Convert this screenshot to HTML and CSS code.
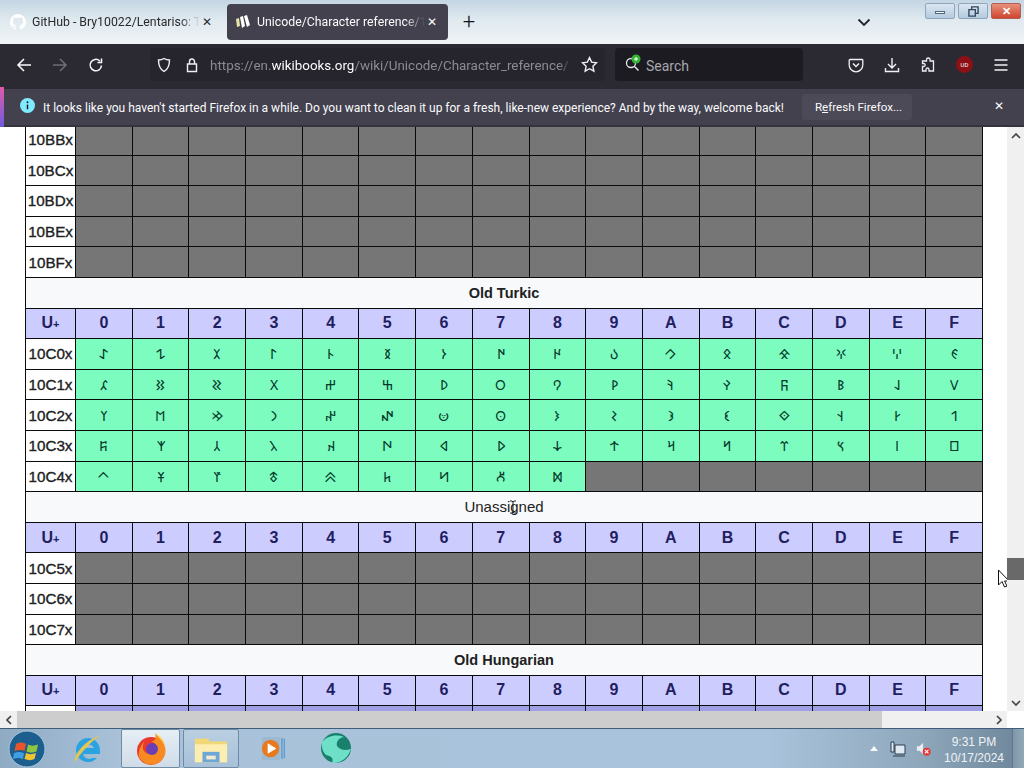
FILE: index.html
```html
<!DOCTYPE html>
<html lang="en">
<head>
<meta charset="utf-8">
<title>Unicode/Character reference/10000-10FFF</title>
<link rel="stylesheet" href="styles.css">
</head>
<body>
<div class="screen">
  <header class="titlebar">
    <div class="tab">
      <svg class="fav" viewBox="0 0 16 16"><path fill="#fff" d="M8 0a8 8 0 0 0-2.500 15.600c.4.100.5-.2.5-.4v-1.400c-2.200.5-2.700-1-2.700-1-.4-.9-.9-1.200-.9-1.200-.7-.5.100-.5.100-.5.800.100 1.200.8 1.200.8.700 1.200 1.900.9 2.300.7.100-.5.300-.9.500-1.100-1.800-.2-3.600-.9-3.600-4 0-.9.300-1.600.8-2.100-.1-.2-.4-1 .1-2.100 0 0 .7-.2 2.200.8a7.600 7.600 0 0 1 4 0c1.500-1 2.200-.8 2.200-.8.500 1.100.2 1.900.1 2.100.5.500.8 1.200.8 2.100 0 3.100-1.900 3.800-3.700 4 .3.300.6.800.6 1.500v2.200c0 .2.100.5.500.4A8 8 0 0 0 8 0z"/></svg>
      <span class="tab-label">GitHub - Bry10022/Lentariso: Th</span>
      <span class="tab-x">✕</span>
    </div>
    <div class="tab tab-active">
      <svg class="fav" viewBox="0 0 16 16"><path fill="#e8e2a8" d="M1 5l3-1 1 8-3 1z"/><path fill="#fff" d="M5 3l3-1 2 10-3 2zM9 2l3-1 3 10-3 2z"/></svg>
      <span class="tab-label">Unicode/Character reference/10</span>
      <span class="tab-x">✕</span>
    </div>
    <div class="newtab">+</div>
    <svg class="chev" viewBox="0 0 14 9"><path d="M1.500 1.500L7 7l5.500-5.500" fill="none" stroke="#20242c" stroke-width="1.800"/></svg>
    <div class="winbtns">
      <div class="winbtn"><span class="win-min"></span></div>
      <div class="winbtn"><svg viewBox="0 0 12 12" class="win-rest"><path d="M1 4h7v7H1zM4 4V1h7v7H8" fill="none" stroke="#33485f" stroke-width="1.500"/></svg></div>
      <div class="winbtn winclose">✕</div>
    </div>
  </header>

  <nav class="toolbar">
    <svg class="navicon" viewBox="0 0 16 16"><path d="M15 8H2M8 2L2 8l6 6" fill="none" stroke="#fbfbfe" stroke-width="1.500"/></svg>
    <svg class="navicon dim" viewBox="0 0 16 16"><path d="M1 8h13M8 2l6 6-6 6" fill="none" stroke="#6f6e76" stroke-width="1.500"/></svg>
    <svg class="navicon" viewBox="0 0 16 16"><path d="M13.500 8.500A5.700 5.700 0 1 1 11.800 4M13.500 1.500V5.500H9.500" fill="none" stroke="#fbfbfe" stroke-width="1.500"/></svg>
    <div class="urlbar">
      <svg class="urlicon" viewBox="0 0 16 16"><path d="M8 1.500c2 1.200 3.700 1.500 5.500 1.500 0 5.500-1.500 9.300-5.500 11.500C4 12.300 2.500 8.500 2.500 3c1.800 0 3.500-.3 5.500-1.500z" fill="none" stroke="#f0f0f4" stroke-width="1.400"/></svg>
      <svg class="urlicon" viewBox="0 0 16 16"><path d="M3.500 7h9v7.500h-9zM5.500 7V4.500a2.500 2.500 0 0 1 5 0V7" fill="none" stroke="#f0f0f4" stroke-width="1.400"/></svg>
      <span class="url"><span class="url-dim">https://en.</span>wikibooks.org<span class="url-dim">/wiki/Unicode/Character_reference/</span></span>
      <svg class="urlstar" viewBox="0 0 16 16"><path d="M8 1.500l2 4.300 4.600.6-3.400 3.200.9 4.700L8 12l-4.100 2.300.9-4.700L1.400 6.400 6 5.800z" fill="none" stroke="#f0f0f4" stroke-width="1.300"/></svg>
    </div>
    <div class="searchbar">
      <span class="searchicon">
        <svg viewBox="0 0 18 18"><circle cx="7" cy="9" r="4.500" fill="none" stroke="#e8e8ec" stroke-width="1.300"/><path d="M10.500 12.500l4 4" stroke="#e8e8ec" stroke-width="1.500"/><circle cx="12" cy="5" r="4.500" fill="#36b336"/><path d="M12 3v4M10 5h4" stroke="#fff" stroke-width="1"/></svg>
      </span>
      <span class="search-label">Search</span>
    </div>
    <div class="tools">
      <svg class="tool" viewBox="0 0 16 16"><path d="M2 2.500h12a.8.8 0 0 1 .8.8V8a6.800 6.800 0 0 1-13.600 0V3.300a.8.8 0 0 1 .8-.8z" fill="none" stroke="#f0f0f4" stroke-width="1.300"/><path d="M5 6.500l3 3 3-3" fill="none" stroke="#f0f0f4" stroke-width="1.500"/></svg>
      <svg class="tool" viewBox="0 0 16 16"><path d="M8 1v9.500M4 7l4 4 4-4M1.500 11v3.500h13V11" fill="none" stroke="#f0f0f4" stroke-width="1.400"/></svg>
      <svg class="tool" viewBox="0 0 16 16"><path d="M6.500 4V2.800a1.800 1.800 0 0 1 3.600 0V4h3.400v10H9V12.500a1.500 1.500 0 0 0-3 0V14H2.500V9.500h1.200a1.500 1.500 0 0 0 0-3H2.500V4z" fill="none" stroke="#f0f0f4" stroke-width="1.300"/></svg>
      <span class="ublock">UD</span>
      <svg class="tool" viewBox="0 0 16 16"><path d="M1.500 3h13M1.500 8h13M1.500 13h13" stroke="#f0f0f4" stroke-width="1.500"/></svg>
    </div>
  </nav>

  <div class="infobar">
    <svg class="infoicon" viewBox="0 0 16 16"><circle cx="8" cy="8" r="8" fill="#80ebff"/><path d="M8 7v5" stroke="#15141a" stroke-width="1.500"/><circle cx="8" cy="4.500" r="1" fill="#15141a"/></svg>
    <span class="infotext">It looks like you haven't started Firefox in a while. Do you want to clean it up for a fresh, like-new experience? And by the way, welcome back!</span>
    <button class="refresh" type="button">R<u>e</u>fresh Firefox...</button>
    <span class="infox">✕</span>
  </div>

  <div class="viewport">
    <main class="page">
      <table class="uni">
        <colgroup><col class="c-label"><col span="16"></colgroup>
        <tbody>
          <tr class="first"><th class="lab">10BBx</th><td class="na"></td><td class="na"></td><td class="na"></td><td class="na"></td><td class="na"></td><td class="na"></td><td class="na"></td><td class="na"></td><td class="na"></td><td class="na"></td><td class="na"></td><td class="na"></td><td class="na"></td><td class="na"></td><td class="na"></td><td class="na"></td></tr>
          <tr><th class="lab">10BCx</th><td class="na"></td><td class="na"></td><td class="na"></td><td class="na"></td><td class="na"></td><td class="na"></td><td class="na"></td><td class="na"></td><td class="na"></td><td class="na"></td><td class="na"></td><td class="na"></td><td class="na"></td><td class="na"></td><td class="na"></td><td class="na"></td></tr>
          <tr><th class="lab">10BDx</th><td class="na"></td><td class="na"></td><td class="na"></td><td class="na"></td><td class="na"></td><td class="na"></td><td class="na"></td><td class="na"></td><td class="na"></td><td class="na"></td><td class="na"></td><td class="na"></td><td class="na"></td><td class="na"></td><td class="na"></td><td class="na"></td></tr>
          <tr><th class="lab">10BEx</th><td class="na"></td><td class="na"></td><td class="na"></td><td class="na"></td><td class="na"></td><td class="na"></td><td class="na"></td><td class="na"></td><td class="na"></td><td class="na"></td><td class="na"></td><td class="na"></td><td class="na"></td><td class="na"></td><td class="na"></td><td class="na"></td></tr>
          <tr><th class="lab">10BFx</th><td class="na"></td><td class="na"></td><td class="na"></td><td class="na"></td><td class="na"></td><td class="na"></td><td class="na"></td><td class="na"></td><td class="na"></td><td class="na"></td><td class="na"></td><td class="na"></td><td class="na"></td><td class="na"></td><td class="na"></td><td class="na"></td></tr>

          <tr><th class="title" colspan="17">Old Turkic</th></tr>
          <tr class="head"><th>U<small>+</small></th><th>0</th><th>1</th><th>2</th><th>3</th><th>4</th><th>5</th><th>6</th><th>7</th><th>8</th><th>9</th><th>A</th><th>B</th><th>C</th><th>D</th><th>E</th><th>F</th></tr>
          <tr><th class="lab">10C0x</th><td class="ch">&#x10C00;</td><td class="ch">&#x10C01;</td><td class="ch">&#x10C02;</td><td class="ch">&#x10C03;</td><td class="ch">&#x10C04;</td><td class="ch">&#x10C05;</td><td class="ch">&#x10C06;</td><td class="ch">&#x10C07;</td><td class="ch">&#x10C08;</td><td class="ch">&#x10C09;</td><td class="ch">&#x10C0A;</td><td class="ch">&#x10C0B;</td><td class="ch">&#x10C0C;</td><td class="ch">&#x10C0D;</td><td class="ch">&#x10C0E;</td><td class="ch">&#x10C0F;</td></tr>
          <tr><th class="lab">10C1x</th><td class="ch">&#x10C10;</td><td class="ch">&#x10C11;</td><td class="ch">&#x10C12;</td><td class="ch">&#x10C13;</td><td class="ch">&#x10C14;</td><td class="ch">&#x10C15;</td><td class="ch">&#x10C16;</td><td class="ch">&#x10C17;</td><td class="ch">&#x10C18;</td><td class="ch">&#x10C19;</td><td class="ch">&#x10C1A;</td><td class="ch">&#x10C1B;</td><td class="ch">&#x10C1C;</td><td class="ch">&#x10C1D;</td><td class="ch">&#x10C1E;</td><td class="ch">&#x10C1F;</td></tr>
          <tr><th class="lab">10C2x</th><td class="ch">&#x10C20;</td><td class="ch">&#x10C21;</td><td class="ch">&#x10C22;</td><td class="ch">&#x10C23;</td><td class="ch">&#x10C24;</td><td class="ch">&#x10C25;</td><td class="ch">&#x10C26;</td><td class="ch">&#x10C27;</td><td class="ch">&#x10C28;</td><td class="ch">&#x10C29;</td><td class="ch">&#x10C2A;</td><td class="ch">&#x10C2B;</td><td class="ch">&#x10C2C;</td><td class="ch">&#x10C2D;</td><td class="ch">&#x10C2E;</td><td class="ch">&#x10C2F;</td></tr>
          <tr><th class="lab">10C3x</th><td class="ch">&#x10C30;</td><td class="ch">&#x10C31;</td><td class="ch">&#x10C32;</td><td class="ch">&#x10C33;</td><td class="ch">&#x10C34;</td><td class="ch">&#x10C35;</td><td class="ch">&#x10C36;</td><td class="ch">&#x10C37;</td><td class="ch">&#x10C38;</td><td class="ch">&#x10C39;</td><td class="ch">&#x10C3A;</td><td class="ch">&#x10C3B;</td><td class="ch">&#x10C3C;</td><td class="ch">&#x10C3D;</td><td class="ch">&#x10C3E;</td><td class="ch">&#x10C3F;</td></tr>
          <tr><th class="lab">10C4x</th><td class="ch">&#x10C40;</td><td class="ch">&#x10C41;</td><td class="ch">&#x10C42;</td><td class="ch">&#x10C43;</td><td class="ch">&#x10C44;</td><td class="ch">&#x10C45;</td><td class="ch">&#x10C46;</td><td class="ch">&#x10C47;</td><td class="ch">&#x10C48;</td><td class="na"></td><td class="na"></td><td class="na"></td><td class="na"></td><td class="na"></td><td class="na"></td><td class="na"></td></tr>

          <tr><th class="title light" colspan="17">Unassigned</th></tr>
          <tr class="head"><th>U<small>+</small></th><th>0</th><th>1</th><th>2</th><th>3</th><th>4</th><th>5</th><th>6</th><th>7</th><th>8</th><th>9</th><th>A</th><th>B</th><th>C</th><th>D</th><th>E</th><th>F</th></tr>
          <tr><th class="lab">10C5x</th><td class="na"></td><td class="na"></td><td class="na"></td><td class="na"></td><td class="na"></td><td class="na"></td><td class="na"></td><td class="na"></td><td class="na"></td><td class="na"></td><td class="na"></td><td class="na"></td><td class="na"></td><td class="na"></td><td class="na"></td><td class="na"></td></tr>
          <tr><th class="lab">10C6x</th><td class="na"></td><td class="na"></td><td class="na"></td><td class="na"></td><td class="na"></td><td class="na"></td><td class="na"></td><td class="na"></td><td class="na"></td><td class="na"></td><td class="na"></td><td class="na"></td><td class="na"></td><td class="na"></td><td class="na"></td><td class="na"></td></tr>
          <tr><th class="lab">10C7x</th><td class="na"></td><td class="na"></td><td class="na"></td><td class="na"></td><td class="na"></td><td class="na"></td><td class="na"></td><td class="na"></td><td class="na"></td><td class="na"></td><td class="na"></td><td class="na"></td><td class="na"></td><td class="na"></td><td class="na"></td><td class="na"></td></tr>

          <tr><th class="title" colspan="17">Old Hungarian</th></tr>
          <tr class="head"><th>U<small>+</small></th><th>0</th><th>1</th><th>2</th><th>3</th><th>4</th><th>5</th><th>6</th><th>7</th><th>8</th><th>9</th><th>A</th><th>B</th><th>C</th><th>D</th><th>E</th><th>F</th></tr>
          <tr><th class="lab"></th><td class="hu"></td><td class="hu"></td><td class="hu"></td><td class="hu"></td><td class="hu"></td><td class="hu"></td><td class="hu"></td><td class="hu"></td><td class="hu"></td><td class="hu"></td><td class="hu"></td><td class="hu"></td><td class="hu"></td><td class="hu"></td><td class="hu"></td><td class="hu"></td></tr>
        </tbody>
      </table>
      <svg class="ibeam" viewBox="0 0 8 14"><path d="M1 1h2l1 1 1-1h2M4 2v10M1 13h2l1-1 1 1h2" fill="none" stroke="#222" stroke-width="1"/></svg>
      <svg class="pointer" viewBox="0 0 12 20"><path d="M1 1v15l3.500-3.500L7 18l2.500-1-2.500-5h4.500z" fill="#fff" stroke="#111" stroke-width="1"/></svg>
    </main>
    <div class="vscroll">
      <span class="arrow-v">
        <svg viewBox="0 0 10 6"><path d="M1 5l4-4 4 4" fill="none" stroke="#444" stroke-width="1.700"/></svg>
      </span>
      <div class="vtrack"><div class="vthumb"></div></div>
      <span class="arrow-v">
        <svg viewBox="0 0 10 6"><path d="M1 1l4 4 4-4" fill="none" stroke="#444" stroke-width="1.700"/></svg>
      </span>
    </div>
  </div>

  <div class="hscroll">
    <span class="arrow-h"><svg viewBox="0 0 6 10"><path d="M5 1L1 5l4 4" fill="none" stroke="#444" stroke-width="1.700"/></svg></span>
    <div class="hthumb"></div>
    <div class="hrest"></div>
    <span class="arrow-h"><svg viewBox="0 0 6 10"><path d="M1 1l4 4-4 4" fill="none" stroke="#444" stroke-width="1.700"/></svg></span>
    <span class="corner"></span>
  </div>

  <footer class="taskbar">
    <div class="start">
      <svg viewBox="0 0 38 38">
        <circle cx="19" cy="19" r="18" fill="#1c5f8e" stroke="#a9c6dc" stroke-width="1"/>
        <path d="M8 14c4-2 6-2 10 0l-1.500 7c-3-1.500-6-1.500-10 0z" fill="#e8542c"/>
        <path d="M20 14.500c3 1.500 6 1.500 10 0l-1.500 7c-4 1.500-7 1.500-10 0z" fill="#8ec63f"/>
        <path d="M6 23c4-1.500 6-1.500 10 0l-1 6c-4-1.500-6-1.500-10 0z" fill="#3f9fe0"/>
        <path d="M18 23c3 1.500 6 1.500 10 0l-1.500 6c-3 1.500-6 1.500-10 0z" fill="#f4c430"/>
      </svg>
    </div>
    <div class="task task-plain">
      <svg viewBox="0 0 34 34"><path d="M29 18a12 12 0 1 0-3 8h-5a6 6 0 0 1-9-4h17zM12 16a6 6 0 0 1 11 0z" fill="#2aa3e0" fill-rule="evenodd"/><path d="M4 30C2 26 10 10 30 3c-10 6-20 18-26 27z" fill="#e4c552"/></svg>
    </div>
    <div class="task task-on">
      <svg viewBox="0 0 34 34"><circle cx="17" cy="19" r="14" fill="#e8392f"/><path d="M5 25a14 14 0 0 0 26-10C29 8 25 6 21 1c2 7-1 8-4 8 4 2 7 5 5 9-2 5-9 5-12 1-2-3-1-6 0-9-3 3-6 9-5 15z" fill="#f78a21"/><circle cx="18" cy="17" r="6" fill="#6a3fb5"/><path d="M21 1c4 5 9 8 10 14 0-7-5-11-10-14z" fill="#ffd23e"/></svg>
    </div>
    <div class="task task-open">
      <svg viewBox="0 0 38 34"><path d="M2 6h14l2 3h18v22H2z" fill="#f0d878"/><path d="M2 12h34v19H2z" fill="#fbeeb0"/><path d="M10 20h18v11H10z" fill="#6ea6d6"/><path d="M14 24h10v4H14z" fill="#f2ead0"/></svg>
    </div>
    <div class="task task-plain media">
      <svg viewBox="0 0 28 28"><rect x="3" y="2" width="19" height="24" fill="#9db9d2"/><path d="M23 3h1.500v22H23zM25.500 4H27v20h-1.500z" fill="#5f9cd0"/><circle cx="12" cy="14" r="9" fill="#e8791f"/><path d="M9 8.500l9 5.500-9 5.500z" fill="#fff"/></svg>
    </div>
    <div class="task task-plain globe">
      <svg viewBox="0 0 34 34"><circle cx="17" cy="16" r="15" fill="#19806e"/><path d="M3 10c5-6 14-8 22-5-6 1-8 5-7 9 3 4 8 5 14 3-3 9-11 15-19 14 2-5-1-7-6-8-3-3-5-8-4-13z" fill="#6fe0c8"/></svg>
    </div>
    <div class="tray">
      <span class="tray-up"></span>
      <svg class="trayicon" viewBox="0 0 16 16"><path d="M1 1h3v10h-3zM5 4h10v9H5zM3 15h12" fill="#dfe9f3" stroke="#2d3d4e" stroke-width="1"/></svg>
      <svg class="trayicon" viewBox="0 0 18 16"><path d="M1 5h3l4-4v13L4 10H1z" fill="#e7eef5"/><circle cx="12" cy="11" r="4.500" fill="#e03a3a"/><path d="M10 9l4 4M14 9l-4 4" stroke="#fff" stroke-width="1.200"/></svg>
      <div class="clock"><span>9:31 PM</span><span>10/17/2024</span></div>
      <div class="showdesk"></div>
    </div>
  </footer>
</div>
</body>
</html>
```
FILE: styles.css
```css
* { box-sizing: border-box; }
html, body { margin: 0; padding: 0; overflow: hidden; }
body { font-family: "Liberation Sans", "Noto Sans", "DejaVu Sans", sans-serif; background: #fff; }
svg { display: block; flex: none; }

.screen { width: 1024px; height: 768px; display: flex; flex-direction: column; overflow: hidden; }

/* title bar */
.titlebar { height: 44px; flex: none; display: flex; align-items: flex-start; padding: 4px 3px 0 4px; background: linear-gradient(180deg, #c4d6e3 0%, #dfe9ef 45%, #f0f4f6 100%); color: #15141a; font-family: Roboto, "Liberation Sans", sans-serif; }
.tab { width: 223px; height: 36px; display: flex; align-items: center; padding: 0 13px 0 6px; border-radius: 4px; font-size: 12.300px; white-space: nowrap; color: #2a2a30; }
.tab-active { width: 221px; padding: 0 9px 0 8px; background: #42414d; color: #fbfbfe; }
.fav { width: 16px; height: 16px; margin-right: 6px; }
.tab-label { flex: 1; overflow: hidden; min-width: 0; -webkit-mask-image: linear-gradient(90deg, #000 88%, transparent 100%); mask-image: linear-gradient(90deg, #000 88%, transparent 100%); }
.tab-x { font-size: 12px; width: 14px; text-align: center; flex: none; }
.newtab { width: 42px; height: 36px; text-align: center; line-height: 35px; font-size: 22px; font-weight: 300; color: #15141a; }
.chev { width: 14px; height: 9px; margin: 14px 0 0 367px; }
.winbtns { display: flex; gap: 3px; margin: -1px 0 0 auto; }
.winbtn { width: 30px; height: 16px; border: 1px solid #8ea6bd; border-radius: 2px; display: flex; align-items: center; justify-content: center; background: linear-gradient(180deg, #dbe7f1, #b4cadd); }
.win-min { width: 10px; height: 3px; background: #f5f8fb; border: 1px solid #51667c; margin-top: 3px; }
.win-rest { width: 11px; height: 11px; }
.winclose { background: linear-gradient(180deg, #e8907c, #d0452e); color: #fff; font-size: 11px; font-weight: bold; border-color: #b06050; }

/* toolbar */
.toolbar { height: 43px; flex: none; display: flex; align-items: center; padding: 0 0 2px 16px; background: #2b2a33; font-family: Roboto, "Liberation Sans", sans-serif; }
.navicon { width: 16px; height: 16px; margin-right: 20px; }
.urlbar { width: 455px; height: 33px; margin-left: 26px; background: #26252d; border-radius: 4px; display: flex; align-items: center; padding: 0 7px 0 6px; color: #fbfbfe; font-size: 13.400px; }
.urlicon { width: 16px; height: 16px; margin-right: 6px; }
.urlicon + .urlicon { margin: 0 10px 0 6px; }
.url { flex: 1; min-width: 0; overflow: hidden; white-space: nowrap; padding-top: 2px; -webkit-mask-image: linear-gradient(90deg, #000 96%, transparent 100%); mask-image: linear-gradient(90deg, #000 96%, transparent 100%); }
.url-dim { color: #8c8b92; }
.urlstar { width: 17px; height: 17px; margin-left: 8px; }
.searchbar { width: 188px; height: 33px; margin-left: 10px; background: #1c1b22; border-radius: 4px; display: flex; align-items: center; padding-left: 9px; color: #a8a8ad; font-size: 14px; }
.searchicon { width: 18px; height: 18px; margin-right: 4px; margin-top: -4px; }
.search-label { padding-top: 2px; }
.tools { display: flex; align-items: center; margin-left: 45px; gap: 20px; }
.tool { width: 16px; height: 16px; }
.ublock { width: 17px; height: 17px; border-radius: 50%; background: #8c1016; color: #fff; font-size: 6px; line-height: 17px; text-align: center; }

/* info bar */
.infobar { height: 40px; flex: none; display: flex; align-items: center; padding: 0 0 0 20px; background: #42414d; color: #fbfbfe; font-family: Roboto, "Liberation Sans", sans-serif; font-size: 12px; border-left: 4px solid transparent; border-image: linear-gradient(180deg, #e65aa8, #6a5ae0) 1; box-shadow: inset 0 -2px 0 #35343e, inset 0 2px 0 #2b2a33; white-space: nowrap; }
.infoicon { width: 15px; height: 15px; margin: -3px 8px 0 -4px; }
.infotext { width: 751px; margin-top: 1px; }
.refresh { width: 110px; height: 26px; border: 0; border-radius: 3px; background: #4b4a56; color: #fbfbfe; font: inherit; font-size: 11.600px; padding: 0 0 0 3px; margin-left: 8px; }
.infox { font-size: 12px; margin-left: 82px; margin-top: -2px; }

/* page */
.viewport { flex: 1; min-height: 0; display: flex; background: #fff; }
.page { flex: 1; min-width: 0; overflow: hidden; position: relative; }
.uni { width: 958px; margin: -3px 0 0 25px; table-layout: fixed; border-collapse: collapse; color: #202122; font-size: 15.500px; }
.c-label { width: 50px; }
.uni tr { height: 30.600px; }
.uni th, .uni td { border: 1px solid #0a0a0a; padding: 0; text-align: center; }
.lab { background: #fff; font-weight: normal; font-size: 15.200px; -webkit-text-stroke: .35px #202122; }
.na { background: #767676; }
.ch { background: #7dfcc0; color: #04392a; font-size: 14px; font-weight: normal; }
.hu { background: #9f9fe6; }
.title { background: #f8f9fa; font-size: 14.500px; font-weight: bold; }
.title.light { font-weight: normal; font-size: 15px; }
.head th { background: #ccccff; color: #1f2060; font-size: 16px; font-weight: bold; }
.head small { font-size: 11px; }

.ibeam { position: absolute; left: 509px; top: 373px; width: 8px; height: 14px; }
.pointer { position: absolute; left: 997px; top: 442px; width: 13px; height: 20px; }

.vscroll { width: 17px; flex: none; background: #f0f0f0; display: flex; flex-direction: column; }
.arrow-v { height: 17px; flex: none; display: flex; align-items: center; justify-content: center; }
.arrow-v svg { width: 10px; height: 6px; }
.vtrack { flex: 1; padding-top: 414px; }
.vthumb { height: 22px; background: #696969; }

.hscroll { height: 17px; flex: none; display: flex; background: #f0f0f0; }
.arrow-h { width: 17px; flex: none; display: flex; align-items: center; justify-content: center; }
.arrow-h svg { width: 6px; height: 10px; }
.hthumb { width: 865px; background: #cdcdcd; }
.hrest { flex: 1; }
.corner { width: 17px; flex: none; background: #fff; }

/* taskbar */
.taskbar { height: 40px; flex: none; display: flex; align-items: center; padding: 0; background: linear-gradient(90deg, #8eabc3 0%, #a9c2da 12%, #a9c3dc 75%, #8ea7bb 90%, #6c8598 100%); border-top: 1px solid #3f5c78; }
.start { width: 54px; flex: none; padding-left: 8px; }
.start svg { width: 38px; height: 38px; }
.task { height: 39px; flex: none; display: flex; align-items: center; justify-content: center; }
.task-plain { width: 67px; }
.task-plain svg { width: 34px; height: 34px; }
.task-on { width: 59px; background: linear-gradient(180deg, #e6eef5, #cfdce8); border: 1px solid #6f8aa3; border-radius: 2px; }
.task-on svg { width: 34px; height: 34px; }
.task-open { width: 56px; margin-left: 3px; margin-right: 3px; background: linear-gradient(180deg, #bacfe1, #a7c1d9); border: 1px solid #6f8aa3; border-radius: 2px; }
.task-open svg { width: 36px; height: 34px; }
.media { width: 56px; margin-left: 2px; }
.media svg { width: 27px; height: 27px; }
.globe { width: 72px; }
.tray { margin-left: auto; display: flex; align-items: center; height: 100%; color: #eef3f7; }
.tray-up { width: 0; height: 0; border: 4px solid transparent; border-top: 0; border-bottom: 5px solid #f6f9fc; margin-right: 12px; }
.trayicon { width: 16px; height: 16px; margin-right: 10px; }
.trayicon + .trayicon { margin-right: 4px; }
.clock { width: 76px; display: flex; flex-direction: column; align-items: center; gap: 1px; font-size: 12px; line-height: 15px; margin-top: 3px; }
.showdesk { width: 12px; height: 100%; border-left: 1px solid #5f7587; background: linear-gradient(90deg, #7f97a9, #93a9b9); }
```
